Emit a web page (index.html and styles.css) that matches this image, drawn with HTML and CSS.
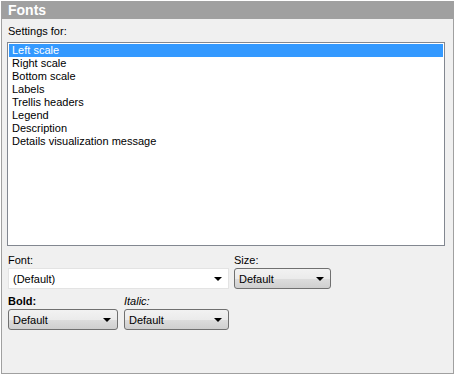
FILE: index.html
```html
<!DOCTYPE html>
<html lang="en">
<head>
   <meta charset="UTF-8">
   <title>Fonts</title>
   <link rel="stylesheet" href="styles.css">
</head>
<body>
   <div class="panel">
       <div class="title">Fonts</div>
       <div class="content">
           <div class="label settings-label">Settings for:</div>
           <ul class="listbox">
               <li class="selected">Left scale</li>
               <li>Right scale</li>
               <li>Bottom scale</li>
               <li>Labels</li>
               <li>Trellis headers</li>
               <li>Legend</li>
               <li>Description</li>
               <li>Details visualization message</li>
           </ul>
           <div class="row font-row">
               <div class="field">
                   <div class="label">Font:</div>
                   <div class="combo edit font-combo"><span>(Default)</span><span class="arrow"></span></div>
               </div>
               <div class="field">
                   <div class="label">Size:</div>
                   <div class="combo size-combo"><span>Default</span><span class="arrow"></span></div>
               </div>
           </div>
           <div class="row style-row">
               <div class="field">
                   <div class="label bold">Bold:</div>
                   <div class="combo bold-combo"><span>Default</span><span class="arrow"></span></div>
               </div>
               <div class="field">
                   <div class="label italic">Italic:</div>
                   <div class="combo italic-combo"><span>Default</span><span class="arrow"></span></div>
               </div>
           </div>
       </div>
   </div>
</body>
</html>
```

FILE: styles.css
```css
body {
    margin: 0;
    background: #ffffff;
    font-family: "Liberation Sans", Arial, sans-serif;
    font-size: 11px;
    color: #000000;
}
.panel {
    margin: 1px;
    width: 451px;
    height: 372px;
    border: 1px solid #a0a0a0;
    border-top: none;
    background: #f0f0f0;
}
.title {
    height: 18px;
    background: #a0a0a0;
    color: #ffffff;
    font-weight: bold;
    font-size: 14px;
    line-height: 18px;
    padding-left: 6px;
}
.content {
    padding: 6px 0 0 5px;
}
.label {
    height: 13px;
    line-height: 13px;
    padding-left: 1px;
}
.settings-label {
    margin-bottom: 4px;
}
.listbox {
    list-style: none;
    margin: 0;
    padding: 1px;
    width: 434px;
    height: 200px;
    background: #ffffff;
    border: 1px solid #828790;
}
.listbox li {
    height: 13px;
    line-height: 13px;
    padding-left: 3px;
}
.listbox .selected {
    background: #3399ff;
    color: #ffffff;
}
.row {
    display: flex;
}
.font-row {
    margin-top: 8px;
    gap: 4px;
}
.style-row {
    margin-top: 6px;
    gap: 5px;
}
.field {
    display: flex;
    flex-direction: column;
    gap: 1px;
}
.combo {
    box-sizing: border-box;
    height: 21px;
    display: flex;
    align-items: center;
    justify-content: space-between;
    padding: 0 6px 0 4px;
    border: 1px solid #707070;
    border-radius: 3px;
    background: linear-gradient(#f2f2f2, #ebebeb 50%, #dddddd 51%, #cfcfcf);
    margin-left: 1px;
}
.combo.edit {
    background: #ffffff;
    border: 1px solid #e3e3e3;
    border-radius: 0;
}
.arrow {
    width: 0;
    height: 0;
    border-left: 4px solid transparent;
    border-right: 4px solid transparent;
    border-top: 4px solid #000000;
}
.font-combo {
    width: 221px;
}
.size-combo {
    width: 97px;
}
.bold-combo {
    width: 110px;
}
.italic-combo {
    width: 105px;
}
.bold {
    font-weight: bold;
}
.italic {
    font-style: italic;
}
```
